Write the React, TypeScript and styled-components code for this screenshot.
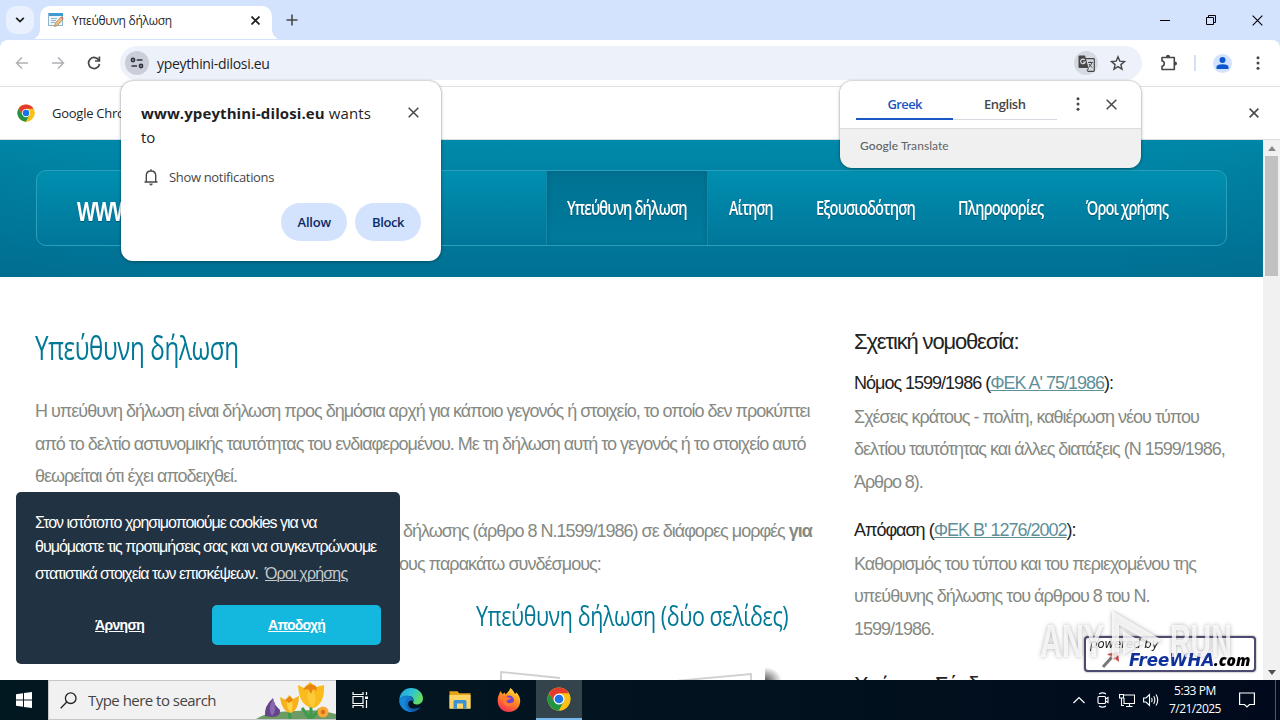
import React, { useLayoutEffect, useRef, useState } from "react";
import styled, { createGlobalStyle, css } from "styled-components";

const Global = createGlobalStyle`
  * { box-sizing: border-box; }
  body { margin: 0; background: #fff; font-family: "Open Sans", "Noto Sans", sans-serif; overflow: hidden; }
  svg { display: block; flex: none; }
`;

/* ---------- text set to an exact measure ---------- */
const FitBox = styled.span<{ $w: number }>`
  display: inline-block;
  flex: none;
  width: ${(p) => p.$w}px;
  white-space: nowrap;
`;
const FitInner = styled.span`
  display: inline-block;
  transform-origin: 0 50%;
  white-space: pre;
`;

type FitProps = { w: number; stretch?: boolean; children: React.ReactNode };
function Fit({ w, stretch, children }: FitProps) {
  const ref = useRef<HTMLSpanElement>(null);
  const [style, setStyle] = useState<React.CSSProperties>({});
  useLayoutEffect(() => {
    const el = ref.current!;
    const natural = el.offsetWidth;
    const count = (el.textContent || "").length;
    setStyle(stretch ? { transform: `scaleX(${w / natural})` } : { letterSpacing: `${(w - natural) / count}px` });
  }, [w, stretch]);
  return (
    <FitBox $w={w}>
      <FitInner ref={ref} style={style}>{children}</FitInner>
    </FitBox>
  );
}

/* ---------- browser frame ---------- */
const Screen = styled.div`
  position: relative;
  width: 1280px;
  height: 720px;
  display: flex;
  flex-direction: column;
  overflow: hidden;
`;
const TabStrip = styled.div`
  height: 40px;
  background: #d3e3fd;
  display: flex;
  padding-left: 6px;
`;
const TabSearch = styled.div`
  width: 28px;
  height: 28px;
  margin-top: 6px;
  border-radius: 10px;
  background: #e9f0fe;
  display: grid;
  place-items: center;
`;
const Tab = styled.div`
  position: relative;
  width: 232px;
  height: 34px;
  margin: 6px 0 0 6px;
  padding: 0 12px 6px 8px;
  border-radius: 10px 10px 0 0;
  background: #fff;
  display: flex;
  align-items: center;
  font-size: 12px;
  color: #1f1f1f;
  &::before, &::after {
    content: "";
    position: absolute;
    bottom: 0;
    width: 10px;
    height: 10px;
  }
  &::before { left: -10px; background: radial-gradient(circle at 0 0, transparent 9.5px, #fff 10px); }
  &::after { right: -10px; background: radial-gradient(circle at 100% 0, transparent 9.5px, #fff 10px); }
`;
const TabTitle = styled.div`
  flex: 1;
  margin-left: 8px;
`;
const NewTab = styled.div`
  width: 40px;
  display: grid;
  place-items: center;
`;
const WindowButtons = styled.div`
  margin-left: auto;
  display: flex;
`;
const WindowButton = styled.div`
  width: 46px;
  display: grid;
  place-items: center;
`;
const Toolbar = styled.div`
  height: 47px;
  display: flex;
  align-items: center;
  background: #fff;
  border-bottom: 1px solid #dfe1e5;
  border-radius: 8px 8px 0 0;
  box-shadow: 0 -8px 0 8px #d3e3fd;
  clip-path: inset(-1px 0 0 0);
`;
const NavButton = styled.div<{ $w?: number; $pad?: number }>`
  width: ${(p) => p.$w ?? 36}px;
  padding-left: ${(p) => p.$pad ?? 0}px;
  height: 36px;
  flex: none;
  display: grid;
  place-items: center;
`;
const Omnibox = styled.div`
  width: 1022px;
  height: 34px;
  flex: none;
  border-radius: 17px;
  background: #edf1fa;
  display: flex;
  align-items: center;
  padding: 0 16px 0 5px;
  font-size: 14px;
  color: #1f1f1f;
`;
const IconDisc = styled.div<{ $bg: string; $size: number }>`
  width: ${(p) => p.$size}px;
  height: ${(p) => p.$size}px;
  flex: none;
  border-radius: 50%;
  background: ${(p) => p.$bg};
  display: grid;
  place-items: center;
`;
const Address = styled.div`
  flex: 1;
  margin: 0 0 0 8px;
`;
const StarSlot = styled.div`
  margin-left: 12px;
`;
const Separator = styled.div`
  width: 2px;
  height: 16px;
  margin: 0 17px 0 0;
  background: #d5e0f5;
`;
const InfoBar = styled.div`
  height: 53px;
  display: flex;
  align-items: center;
  padding: 0 21px 0 17px;
  gap: 17px;
  font-size: 13px;
  color: #1f1f1f;
  background: #fff;
  border-bottom: 1px solid #d9dde2;
`;
const Grow = styled.div`
  flex: 1;
`;

/* ---------- web page ---------- */
const Viewport = styled.div`
  position: relative;
  height: 540px;
  display: flex;
`;
const Page = styled.div`
  width: 1263px;
  height: 540px;
  overflow: hidden;
  background: #fff;
  font-family: "Liberation Sans", Arial, sans-serif;
`;
const Header = styled.header`
  height: 137px;
  padding: 30px 36px 0 36px;
  background: linear-gradient(90deg, rgba(0, 60, 90, 0.05), transparent 12%, transparent 88%, rgba(0, 60, 90, 0.05)),
    linear-gradient(#0089aa, #007093);
`;
const MenuBar = styled.nav`
  height: 76px;
  border: 1px solid #2c9fbb;
  border-radius: 10px;
  background: linear-gradient(#008fb0, #007699);
  display: flex;
  color: #fff;
  font: 600 20px "Open Sans", sans-serif;
  letter-spacing: -1.2px;
  text-shadow: 0 1px 1px rgba(0, 50, 70, 0.5);
`;
const Brand = styled.div`
  width: 509px;
  padding: 6px 0 0 40px;
  display: flex;
  align-items: center;
  font-size: 26px;
  font-weight: 700;
`;
const MenuItem = styled.div<{ $active?: boolean }>`
  padding: 0 21px 1px 20px;
  display: flex;
  align-items: center;
  border-left: 1px solid transparent;
  border-right: 1px solid transparent;
  ${(p) =>
    p.$active &&
    css`
      padding-right: 20px;
      border-color: #1587a6;
      background: linear-gradient(#007292, #007a9c);
      box-shadow: inset 0 0 5px rgba(0, 60, 80, 0.25);
    `}
`;
const Columns = styled.div`
  display: flex;
  padding-left: 35px;
`;
const Main = styled.main`
  width: 819px;
  padding-top: 51px;
`;
const Side = styled.aside`
  width: 380px;
  padding-top: 50px;
`;
const Title = styled.h1`
  margin: 0;
  height: 40px;
  font: 500 32px/40px "Open Sans", sans-serif;
  letter-spacing: -0.5px;
  color: #007896;
`;
const SubTitle = styled.h2`
  margin: 17px 0 0 441px;
  height: 40px;
  font: 500 27px/38px "Open Sans", sans-serif;
  letter-spacing: -0.5px;
  color: #007896;
`;
const Line = styled.div<{ $h?: number; $indent?: number; $top?: number; $dark?: boolean }>`
  height: ${(p) => p.$h ?? 32.5}px;
  line-height: ${(p) => p.$h ?? 32.5}px;
  margin-top: ${(p) => p.$top ?? 0}px;
  padding-left: ${(p) => p.$indent ?? 0}px;
  font-size: 18px;
  color: ${(p) => (p.$dark ? "#222" : "#868a83")};
`;
const SideTitle = styled.h3<{ $top?: number }>`
  margin: ${(p) => p.$top ?? 0}px 0 0;
  height: 30px;
  font: 400 22px/30px "Liberation Sans", Arial, sans-serif;
  color: #222;
`;
const Link = styled.a`
  color: #5f8f99;
  text-decoration: underline;
  text-decoration-thickness: 1px;
`;
const PaperPreview = styled.div`
  margin: 27px 0 0 450px;
  height: 14px;
`;
const ScrollBar = styled.div`
  width: 17px;
  background: #f1f1f1;
  display: flex;
  flex-direction: column;
  align-items: center;
  justify-content: space-between;
`;
const Thumb = styled.div`
  width: 13px;
  height: 120px;
  margin-bottom: auto;
  background: #c1c1c1;
`;
const ScrollArrow = styled.div`
  height: 16px;
  display: grid;
  place-items: center;
`;

/* ---------- overlays ---------- */
const Cookie = styled.div`
  position: absolute;
  left: 16px;
  top: 492px;
  width: 384px;
  height: 172px;
  padding: 19px 19px 0;
  border-radius: 5px;
  background: #213242;
  color: #fff;
  font: 16px/24px "Liberation Sans", Arial, sans-serif;
`;
const CookieLine = styled.div<{ $top?: number }>`
  display: flex;
  height: 24px;
  margin-top: ${(p) => p.$top ?? 0}px;
`;
const CookieLink = styled.a`
  color: #c3c8cc;
  text-decoration: underline;
  text-decoration-thickness: 1px;
`;
const CookieButtons = styled.div`
  display: flex;
  gap: 8px;
  margin-top: 19px;
`;
const CookieButton = styled.div<{ $bg?: string }>`
  width: 169px;
  height: 40px;
  border-radius: 5px;
  background: ${(p) => p.$bg ?? "transparent"};
  display: grid;
  place-items: center;
  font-size: 14px;
  font-weight: 700;
  & span { text-decoration: underline; }
`;
const Prompt = styled.div`
  position: absolute;
  left: 121px;
  top: 81px;
  width: 320px;
  height: 180px;
  padding: 20px;
  border-radius: 12px;
  background: #fff;
  box-shadow: 0 0 2px rgba(0, 0, 0, 0.4), 0 1px 4px rgba(0, 0, 0, 0.2);
  color: #1f1f1f;
`;
const PromptHead = styled.div`
  display: flex;
  justify-content: space-between;
  height: 48px;
  font-size: 15px;
  font-weight: 500;
  line-height: 24px;
`;
const PromptClose = styled.div`
  padding: 6px 2px 0 0;
`;
const PromptRow = styled.div`
  display: flex;
  align-items: center;
  gap: 8px;
  height: 24px;
  margin-top: 16px;
  font-size: 13px;
  color: #474747;
`;
const PromptButtons = styled.div`
  display: flex;
  justify-content: flex-end;
  gap: 8px;
  margin-top: 14px;
`;
const Pill = styled.div`
  width: 66px;
  height: 38px;
  border-radius: 19px;
  background: #d3e3fd;
  color: #0b2a66;
  font-size: 13px;
  font-weight: 600;
  display: grid;
  place-items: center;
`;
const Translate = styled.div`
  position: absolute;
  left: 840px;
  top: 81px;
  width: 301px;
  height: 87px;
  border-radius: 12px;
  overflow: hidden;
  background: #f0f0f0;
  box-shadow: 0 0 2px rgba(0, 0, 0, 0.4), 0 1px 4px rgba(0, 0, 0, 0.2);
`;
const TranslateTop = styled.div`
  height: 48px;
  padding-left: 16px;
  display: flex;
  background: #fff;
  border-bottom: 1px solid #dcdcdc;
`;
const LangTab = styled.div<{ $on?: boolean }>`
  width: ${(p) => (p.$on ? 97 : 104)}px;
  height: 39px;
  padding-top: 8px;
  display: grid;
  place-items: center;
  font-size: 13px;
  font-weight: 600;
  color: ${(p) => (p.$on ? "#1a56c4" : "#474747")};
  border-bottom: ${(p) => (p.$on ? "2px solid #1a56c4" : "1px solid #d6dae0")};
`;
const TranslateIcon = styled.div<{ $w: number }>`
  width: ${(p) => p.$w}px;
  padding-top: 7px;
  height: 39px;
  display: grid;
  place-items: center;
`;
const TranslateFoot = styled.div`
  padding: 8px 0 0 20px;
  font: 12px/18px Lato, Roboto, sans-serif;
  color: #5f6368;
`;
const Medium = styled.span`
  font-weight: 500;
`;
const HostBadge = styled.div`
  position: absolute;
  left: 1084px;
  top: 636px;
  width: 172px;
  height: 36px;
  border: 2px solid #4b4a70;
  border-radius: 4px;
  background: #fff;
  box-shadow: 0 0 2px #777;
`;
const Powered = styled.div`
  height: 12px;
  padding-left: 4px;
  font: italic 12px/13px "DejaVu Sans", cursive;
  color: #222;
`;
const HostName = styled.div`
  display: flex;
  align-items: center;
  height: 20px;
  padding-left: 14px;
  font: italic 900 17px/20px "DejaVu Sans", sans-serif;
  color: #10309c;
`;
const DotCom = styled.span`
  font: italic 800 16px/20px "Open Sans", sans-serif;
  color: #000;
`;
const Watermark = styled.div`
  position: absolute;
  left: 1040px;
  top: 606px;
  width: 194px;
  height: 64px;
  display: flex;
  align-items: center;
  gap: 6px;
  padding-top: 6px;
  font: 700 46px/60px "Liberation Sans", Arial, sans-serif;
  color: rgba(255, 255, 255, 0.78);
  filter: drop-shadow(0 0 2px rgba(90, 90, 90, 0.6));
`;

/* ---------- taskbar ---------- */
const Taskbar = styled.div`
  position: relative;
  height: 40px;
  display: flex;
  background: linear-gradient(90deg, #021821, #02131f 55%, #010a1c);
  color: #fff;
`;
const TaskSlot = styled.div<{ $w: number; $active?: boolean }>`
  width: ${(p) => p.$w}px;
  height: 40px;
  flex: none;
  display: grid;
  place-items: center;
  background: ${(p) => (p.$active ? "#34444c" : "transparent")};
  border-bottom: ${(p) => (p.$active ? "2px solid #76b9ed" : "0")};
`;
const SearchBox = styled.div`
  width: 288px;
  height: 40px;
  display: flex;
  align-items: center;
  padding-left: 11px;
  border: 1px solid #c4c8ca;
  border-right: 0;
  background: #f1f1f1;
  color: #444;
  font-size: 15px;
`;
const SearchText = styled.div`
  margin-left: 11px;
  flex: 1;
`;
const Clock = styled.div`
  width: 64px;
  display: flex;
  flex-direction: column;
  align-items: center;
  font-size: 12px;
  line-height: 18px;
`;
const DesktopEdge = styled.div`
  width: 5px;
  border-left: 1px solid #4d5866;
`;

/* ---------- drawings ---------- */
const Cross = ({ s = 10, c = "#474747", t = 1.5 }: { s?: number; c?: string; t?: number }) => (
  <svg width={s} height={s} viewBox="0 0 10 10" stroke={c} strokeWidth={(t * 10) / s}>
    <path d="M.6.6 9.4 9.4M9.4.6.6 9.4" />
  </svg>
);
const Dots = () => (
  <svg width="4" height="16" viewBox="0 0 4 16" fill="#474747">
    <circle cx="2" cy="2.8" r="1.5" /><circle cx="2" cy="8" r="1.5" /><circle cx="2" cy="13.2" r="1.5" />
  </svg>
);
const ChromeLogo = ({ s }: { s: number }) => (
  <svg width={s} height={s} viewBox="0 0 48 48">
    <circle cx="24" cy="24" r="23" fill="#fbc116" />
    <path d="M4.1 12.5A23 23 0 0 0 24 47L33.5 29.5 24 24 14.5 29.5Z" fill="#229342" />
    <path d="M24 13H43.9A23 23 0 0 1 24 47L33.5 29.5Z" fill="#fbc116" />
    <path d="M4.1 12.5A23 23 0 0 1 43.9 12.5H24L14.5 29.5Z" fill="#e33b2e" />
    <circle cx="24" cy="24" r="11" fill="#fff" />
    <circle cx="24" cy="24" r="8.7" fill="#1a73e8" />
  </svg>
);
const Favicon = () => (
  <svg width="16" height="16" viewBox="0 0 16 16">
    <rect x=".5" y="1.5" width="14" height="12" fill="#eef6fb" stroke="#8fb4cc" />
    <rect x="1" y="1" width="14" height="3" fill="#3c9ed0" />
    <path d="M3 6.5h6M3 8.5h5M3 10.5h4" stroke="#90b6c9" />
    <path d="m6.500 14.500 1-3.500L13 5l2 2L9.500 13.500Z" fill="#f0c083" stroke="#a77844" strokeWidth=".7" />
    <path d="m12.500 5.500 1.300-1.200 2 2L14.500 7.500Z" fill="#d87969" />
  </svg>
);
const Arrow = ({ flip }: { flip?: boolean }) => (
  <svg width="14" height="14" viewBox="0 0 14 14" fill="none" stroke="#aeb1b5" strokeWidth="1.5">
    <path d={flip ? "M1 7h11M7 1.500 12.500 7 7 12.500" : "M13 7H2M7 1.500 1.500 7 7 12.500"} />
  </svg>
);
const Crocuses = () => (
  <svg width="80" height="38" viewBox="0 0 80 38">
    <path d="M0 38C12 30 28 31 40 30C56 28 68 30 80 33V38Z" fill="#6c9b63" />
    <path d="M55 22V38M33 28 34 38M64 28 55 38M46 27 54 38" stroke="#3e9b4c" strokeWidth="3" />
    <path d="M9 35Q8 25 17 17Q18 24 24 29Q25 36 16 36Z" fill="#65448c" />
    <path d="M16 35Q11 28 17 18Q22 29 16 35Z" fill="#886aae" />
    <path d="M24 16 30 19 33 14 37 18 43 15Q43 29 35 32Q26 31 24 16Z" fill="#f7b21b" />
    <path d="M33 14Q39 22 35 32Q28 25 33 14Z" fill="#ffd34a" />
    <path d="M42 4 48 7 54 1 60 6 68 4Q69 22 58 27Q43 26 42 4Z" fill="#fabb1d" />
    <path d="M54 5Q63 15 57 27Q48 18 54 5Z" fill="#fccb3a" />
    <path d="M47 9 50 5 55 3 60 5 61 10 57 8 55 13 52 8Z" fill="#e9860f" />
    <path d="M29 19 34 15 37 19 33 22Z" fill="#e9860f" />
    <circle cx="67" cy="31" r="5.500" fill="#f8a936" /><circle cx="67" cy="31" r="2.200" fill="#dc6c20" />
  </svg>
);
const Edge = () => (
  <svg width="24" height="24" viewBox="0 0 24 24">
    <defs>
      <linearGradient id="eg" x1="0" y1="0" x2="1" y2=".4"><stop stopColor="#1fa1e6" /><stop offset=".55" stopColor="#2fc3d4" /><stop offset="1" stopColor="#62dd64" /></linearGradient>
      <linearGradient id="eb" x1="0" y1="0" x2="1" y2="1"><stop stopColor="#1b86dc" /><stop offset="1" stopColor="#0d4c9a" /></linearGradient>
    </defs>
    <path d="M.3 11.500C1 4.500 6 0 12 0c7 0 12 5 12 10.500 0 3.500-2.700 6-6.300 6-2.500 0-4-1-3.500-2.200C15.500 11 13.500 8 9.500 8 5 8 1.500 9.500.3 11.500Z" fill="url(#eg)" />
    <path d="M.3 11.500C1.300 8.800 5 7.200 8.300 7.400c4 .2 6.500 3.200 5.900 6-1.500-1.900-5-.9-5 2.600 0 4 5 6.500 12.500 3C19.500 22 16 24 12 24 5 24 0 18.500.3 11.500Z" fill="url(#eb)" />
    <path d="M8 9.500C4.500 13 6 22.500 14 23.800 8 24.500.5 20 .3 12.500 1.800 9.700 5 8.500 8 9.500Z" fill="#1686d9" />
  </svg>
);
const Folder = () => (
  <svg width="22" height="20" viewBox="0 0 22 20">
    <path d="M.5 2.500V1.200h8l1.700 2H21.500V18H.5Z" fill="#e8a317" />
    <path d="M.5 5H21.500V18.800H.5Z" fill="#fcd566" />
    <path d="M4.500 18.800V11.500Q4.500 10 6 10H16Q17.500 10 17.500 11.500V18.800H14V15H8V18.800Z" fill="#3c92d2" />
    <path d="M8 13.500H14V15.500H8Z" fill="#fcd566" />
  </svg>
);
const Firefox = () => (
  <svg width="24" height="24" viewBox="0 0 24 24">
    <defs>
      <linearGradient id="ff" x1=".8" y1="0" x2=".3" y2="1"><stop stopColor="#fff04a" /><stop offset=".4" stopColor="#ff9a1c" /><stop offset="1" stopColor="#f52c55" /></linearGradient>
    </defs>
    <path d="M2 6.500 3.500 3 5.500 6 8 4.500 8.200 6.500C10.500 4.800 12 3 13.500 0 16 2 17 4 18 6L19.500 4.500C22.500 7.500 23.700 11 23 15 22 20.500 17.500 24 12 24 5.500 24 .8 19.500.7 13 .7 10.500 1 8.500 2 6.500Z" fill="url(#ff)" />
    <circle cx="12" cy="12.500" r="5" fill="#7043d2" />
    <path d="M4 8.500C7 7 9.500 8 11.500 9.500L14 10C13 12 10 11.500 9.500 13.500 10.500 16 14 15.500 17 13.500 17 19 9 20.500 6.500 15Z" fill="#ff7a2c" />
  </svg>
);

const WATERMARK_PLAY = "M2 0 52 29 44 34 34 28 9 14V44L2 48ZM13 20 34 32 13 44Z";

export default function App() {
  return (
    <Screen>
      <Global />
      <TabStrip>
        <TabSearch>
          <svg width="10" height="6" viewBox="0 0 10 6" fill="none" stroke="#1f1f1f" strokeWidth="1.800"><path d="m1.200.8 3.800 3.800L8.800.8" /></svg>
        </TabSearch>
        <Tab>
          <Favicon />
          <TabTitle><Fit w={100}>Υπεύθυνη δήλωση</Fit></TabTitle>
          <Cross s={9} t={1.7} c="#1f1f1f" />
        </Tab>
        <NewTab>
          <svg width="12" height="12" viewBox="0 0 12 12" stroke="#474747" strokeWidth="1.600"><path d="M6 .5v11M.5 6h11" /></svg>
        </NewTab>
        <WindowButtons>
          <WindowButton><svg width="10" height="10" viewBox="0 0 10 10" stroke="#000"><path d="M0 5.500h10" /></svg></WindowButton>
          <WindowButton>
            <svg width="10" height="10" viewBox="0 0 10 10" fill="none" stroke="#000"><path d="M.5 2.500h7v7h-7zM2.500 2.500v-2h7v7h-2" /></svg>
          </WindowButton>
          <WindowButton><Cross s={11} c="#000" t={1.1} /></WindowButton>
        </WindowButtons>
      </TabStrip>

      <Toolbar>
        <NavButton $w={44}><Arrow /></NavButton>
        <NavButton $w={28}><Arrow flip /></NavButton>
        <NavButton $w={48}>
          <svg width="18" height="14" viewBox="2 0 18 14" fill="none" stroke="#474747" strokeWidth="1.700">
            <path d="M14 4.500A5.500 5.500 0 1 0 14.500 8" /><path d="M14.400.5V5H10" />
          </svg>
        </NavButton>
        <Omnibox>
          <IconDisc $bg="#c9ced8" $size={24}>
            <svg width="14" height="12" viewBox="0 0 14 12" fill="none" stroke="#303338" strokeWidth="1.600">
              <circle cx="3" cy="3" r="1.600" /><path d="M6.800 3H12.500M1.500 9H7" /><circle cx="11" cy="9" r="1.600" />
            </svg>
          </IconDisc>
          <Address><Fit w={113}>ypeythini-dilosi.eu</Fit></Address>
          <IconDisc $bg="#d5d9e1" $size={24}>
            <svg width="17" height="17" viewBox="0 0 17 17" fill="none">
              <path d="M7 3.700H15.500Q16.300 3.700 16.300 4.500V15.500Q16.300 16.300 15.500 16.300H9.500" stroke="#474747" strokeWidth="1.200" />
              <path d="M1.500.5H7L10.500 13H1.500Q.5 13 .5 12V1.500Q.5.5 1.500.5Z" fill="#474747" />
              <path d="M6.800 5A2.300 2.300 0 1 0 7.200 7H5" stroke="#dfe2e7" strokeWidth="1.100" />
              <path d="M10 7.500H14.800M12.300 6.500V7.500M14 7.500Q13 10.500 10.700 12M11 9Q12 11 14.300 12.500M10.500 13 9 16" stroke="#474747" />
            </svg>
          </IconDisc>
          <StarSlot>
            <svg width="16" height="16" viewBox="0 0 16 16" fill="none" stroke="#474747" strokeWidth="1.400">
              <path d="m8 1.800 1.800 4.300 4.700.4-3.600 3.100 1.100 4.600L8 11.700l-4 2.500 1.100-4.600L1.500 6.500l4.700-.4Z" />
            </svg>
          </StarSlot>
        </Omnibox>
        <NavButton $w={52} $pad={2}>
          <svg width="18" height="18" viewBox="0 0 18 18" fill="none" stroke="#474747" strokeWidth="1.600" strokeLinejoin="round">
            <path d="M2 3.500H14.300V15.500H2V12.200C5 12.200 5 7 2 7Z" />
            <path d="M6 3V2.800A2 2 0 0 1 10 2.800V3ZM14.800 7.500H15A2 2 0 0 1 15 11.500H14.800Z" fill="#474747" stroke="none" />
          </svg>
        </NavButton>
        <Separator />
        <IconDisc $bg="#d3e3fd" $size={19}>
          <svg width="13" height="12" viewBox="0 0 13 12" fill="#0b57d0"><circle cx="6.500" cy="3" r="3" /><path d="M.5 12V10Q.5 7.200 6.500 7.200T12.500 10V12Z" /></svg>
        </IconDisc>
        <NavButton $w={48} $pad={4}><Dots /></NavButton>
      </Toolbar>

      <InfoBar>
        <ChromeLogo s={18} />
        <Grow><Fit w={244}>Google Chrome isn't your default browser</Fit></Grow>
        <Cross />
      </InfoBar>

      <Viewport>
        <Page>
          <Header>
            <MenuBar>
              <Brand><Fit w={244} stretch>WWW.YPEYTHINI-DILOSI.EU</Fit></Brand>
              <MenuItem $active><Fit w={120} stretch>Υπεύθυνη δήλωση</Fit></MenuItem>
              <MenuItem><Fit w={44} stretch>Αίτηση</Fit></MenuItem>
              <MenuItem><Fit w={99} stretch>Εξουσιοδότηση</Fit></MenuItem>
              <MenuItem><Fit w={85} stretch>Πληροφορίες</Fit></MenuItem>
              <MenuItem><Fit w={82} stretch>Όροι χρήσης</Fit></MenuItem>
            </MenuBar>
          </Header>
          <Columns>
            <Main>
              <Title><Fit w={204} stretch>Υπεύθυνη δήλωση</Fit></Title>
              <Line $top={27}><Fit w={775}>Η υπεύθυνη δήλωση είναι δήλωση προς δημόσια αρχή για κάποιο γεγονός ή στοιχείο, το οποίο δεν προκύπτει</Fit></Line>
              <Line><Fit w={771}>από το δελτίο αστυνομικής ταυτότητας του ενδιαφερομένου. Με τη δήλωση αυτή το γεγονός ή το στοιχείο αυτό</Fit></Line>
              <Line><Fit w={202}>θεωρείται ότι έχει αποδειχθεί.</Fit></Line>
              <Line $top={22.5} $indent={368}><Fit w={409}>δήλωσης (άρθρο 8 Ν.1599/1986) σε διάφορες μορφές <b>για</b></Fit></Line>
              <Line $indent={364}><Fit w={202}>ους παρακάτω συνδέσμους:</Fit></Line>
              <SubTitle><Fit w={312} stretch>Υπεύθυνη δήλωση (δύο σελίδες)</Fit></SubTitle>
              <PaperPreview>
                <svg width="310" height="20" viewBox="0 0 310 20">
                  <defs>
                    <radialGradient id="sh" cx="0" cy="1" r="1"><stop stopColor="#555" /><stop offset="1" stopColor="#fff" /></radialGradient>
                  </defs>
                  <path d="M16 20V8L75 14M190 17 266 10V20" fill="none" stroke="#cfcfd1" strokeWidth="1.800" />
                  <rect x="280" y="3" width="17" height="14" fill="url(#sh)" />
                </svg>
              </PaperPreview>
            </Main>
            <Side>
              <SideTitle><Fit w={164}>Σχετική νομοθεσία:</Fit></SideTitle>
              <Line $dark $top={10}><Fit w={259}>Νόμος 1599/1986 (<Link>ΦΕΚ Α' 75/1986</Link>):</Fit></Line>
              <Line $top={1}><Fit w={345}>Σχέσεις κράτους - πολίτη, καθιέρωση νέου τύπου</Fit></Line>
              <Line><Fit w={371}>δελτίου ταυτότητας και άλλες διατάξεις (Ν 1599/1986,</Fit></Line>
              <Line><Fit w={69}>Άρθρο 8).</Fit></Line>
              <Line $dark $top={15.5}><Fit w={222}>Απόφαση (<Link>ΦΕΚ Β' 1276/2002</Link>):</Fit></Line>
              <Line $top={1.5}><Fit w={342}>Καθορισμός του τύπου και του περιεχομένου της</Fit></Line>
              <Line><Fit w={295}>υπεύθυνης δήλωσης του άρθρου 8 του Ν.</Fit></Line>
              <Line><Fit w={80}>1599/1986.</Fit></Line>
              <SideTitle $top={24.5}><Fit w={175}>Χρήσιμοι Σύνδεσμοι:</Fit></SideTitle>
            </Side>
          </Columns>
        </Page>
        <ScrollBar>
          <ScrollArrow><svg width="8" height="5" viewBox="0 0 8 5" fill="#8a8a8a"><path d="M0 5 4 0 8 5Z" /></svg></ScrollArrow>
          <Thumb />
          <ScrollArrow><svg width="8" height="5" viewBox="0 0 8 5" fill="#505050"><path d="M0 0 4 5 8 0Z" /></svg></ScrollArrow>
        </ScrollBar>
      </Viewport>

      <Taskbar>
        <TaskSlot $w={48}>
          <svg width="16" height="16" viewBox="0 0 16 16" fill="#fff"><path d="M0 2.200 7 1.200V7.500H0ZM8 1 16 0V7.500H8ZM0 8.500H7V14.800L0 13.800ZM8 8.500H16V16L8 15Z" /></svg>
        </TaskSlot>
        <SearchBox>
          <svg width="17" height="17" viewBox="0 0 17 17" fill="none" stroke="#222" strokeWidth="1.300"><circle cx="10.700" cy="6.200" r="5.300" /><path d="M6.800 10 .7 16.200" /></svg>
          <SearchText><Fit w={128}>Type here to search</Fit></SearchText>
          <Crocuses />
        </SearchBox>
        <TaskSlot $w={48}>
          <svg width="17" height="16" viewBox="0 0 17 16" fill="none" stroke="#fff" strokeWidth="1.200">
            <path d="M1 0V2.500H11V0M1 4.500H11V11.500H1ZM1 16V13.500H11V16M14.500 0V3M14.500 8V16" /><path d="M13 4.500H16V7H13Z" fill="#fff" stroke="none" />
          </svg>
        </TaskSlot>
        <TaskSlot $w={54}><Edge /></TaskSlot>
        <TaskSlot $w={44}><Folder /></TaskSlot>
        <TaskSlot $w={54}><Firefox /></TaskSlot>
        <TaskSlot $w={46} $active><ChromeLogo s={24} /></TaskSlot>
        <Grow />
        <TaskSlot $w={24}>
          <svg width="12" height="8" viewBox="0 0 12 8" fill="none" stroke="#fff" strokeWidth="1.200"><path d="M.5 7 6 1.500 11.500 7" /></svg>
        </TaskSlot>
        <TaskSlot $w={24}>
          <svg width="12" height="16" viewBox="0 0 12 16" fill="none" stroke="#fff" strokeWidth="1.100"><rect x="1" y="4.500" width="7.500" height="7" rx="1" /><path d="M8.500 7 11 5.500V10.500L8.500 9M2 2Q5.500-.3 9 2M2 14Q5.500 16.300 9 14" /></svg>
        </TaskSlot>
        <TaskSlot $w={24}>
          <svg width="16" height="15" viewBox="0 0 16 15" fill="none" stroke="#fff" strokeWidth="1.100"><path d="M5 2H15.500V10.500H5V5M10.500 10.500V13.500M7 13.500H13.500M.5 1.500H4.500V5H.5ZM2.500 5V12.500H5" /></svg>
        </TaskSlot>
        <TaskSlot $w={24}>
          <svg width="16" height="14" viewBox="0 0 16 14" fill="none" stroke="#fff" strokeWidth="1.100"><path d="M.6 5H3L6.500 1.500V12.500L3 9H.6ZM8.500 5Q9.700 7 8.500 9M10.700 3.200Q13 7 10.700 10.800M13 1.500Q16.500 7 13 12.500" /></svg>
        </TaskSlot>
        <TaskSlot $w={64}>
          <Clock>
            <Fit w={42}>5:33 PM</Fit>
            <Fit w={52}>7/21/2025</Fit>
          </Clock>
        </TaskSlot>
        <TaskSlot $w={40}>
          <svg width="16" height="16" viewBox="0 0 16 16" fill="none" stroke="#fff" strokeWidth="1.200"><path d="M.6 1H15.400V12.500H10.500L8 15 5.500 12.500H.6Z" /></svg>
        </TaskSlot>
        <TaskSlot $w={8} />
        <DesktopEdge />
      </Taskbar>

      <Cookie>
        <CookieLine><Fit w={282}>Στον ιστότοπο χρησιμοποιούμε cookies για να</Fit></CookieLine>
        <CookieLine><Fit w={341}>θυμόμαστε τις προτιμήσεις σας και να συγκεντρώνουμε</Fit></CookieLine>
        <CookieLine $top={3}>
          <Fit w={230}>στατιστικά στοιχεία των επισκέψεων.  </Fit>
          <Fit w={82}><CookieLink>Όροι χρήσης</CookieLink></Fit>
        </CookieLine>
        <CookieButtons>
          <CookieButton $bg="transparent"><Fit w={49}>Άρνηση</Fit></CookieButton>
          <CookieButton $bg="#14b8de"><Fit w={57}>Αποδοχή</Fit></CookieButton>
        </CookieButtons>
      </Cookie>

      <HostBadge>
        <Powered><Fit w={69} stretch>powered by</Fit></Powered>
        <HostName>
          <svg width="29" height="20" viewBox="0 0 29 20"><path d="M3 17 12 7" stroke="#777" strokeWidth="3" /><path d="M7 4 18 2 19 12 14 8Z" fill="#c84444" /><path d="m8 5 9 1-2 4Z" fill="#eda0a0" /></svg>
          <Fit w={85} stretch>FreeWHA</Fit>
          <DotCom><Fit w={36} stretch>.com</Fit></DotCom>
        </HostName>
      </HostBadge>
      <Watermark>
        <Fit w={64} stretch>ANY</Fit>
        <svg width="54" height="60" viewBox="0 0 54 60" fill="rgba(255,255,255,.8)" fillRule="evenodd"><path d={WATERMARK_PLAY} /></svg>
        <Fit w={62} stretch>RUN</Fit>
      </Watermark>

      <Prompt>
        <PromptHead>
          <div>
            <div><Fit w={230}><b>www.ypeythini-dilosi.eu</b> wants</Fit></div>
            <div>to</div>
          </div>
          <PromptClose><Cross s={11} /></PromptClose>
        </PromptHead>
        <PromptRow>
          <svg width="20" height="20" viewBox="0 0 20 20" fill="none" stroke="#474747" strokeWidth="1.400">
            <path d="M3.500 15H16.500M5.300 15V8.500Q5.300 4 10 4T14.700 8.500V15M10 4V2.300" /><path d="M8.500 17H11.500L10 18.300Z" fill="#474747" strokeWidth=".8" />
          </svg>
          <Fit w={105}>Show notifications</Fit>
        </PromptRow>
        <PromptButtons>
          <Pill><Fit w={33}>Allow</Fit></Pill>
          <Pill><Fit w={32}>Block</Fit></Pill>
        </PromptButtons>
      </Prompt>

      <Translate>
        <TranslateTop>
          <LangTab $on><Fit w={34}>Greek</Fit></LangTab>
          <LangTab><Fit w={42}>English</Fit></LangTab>
          <TranslateIcon $w={41}><Dots /></TranslateIcon>
          <TranslateIcon $w={26}><Cross s={11} /></TranslateIcon>
        </TranslateTop>
        <TranslateFoot><Fit w={89}><Medium>Google</Medium> Translate</Fit></TranslateFoot>
      </Translate>
    </Screen>
  );
}
